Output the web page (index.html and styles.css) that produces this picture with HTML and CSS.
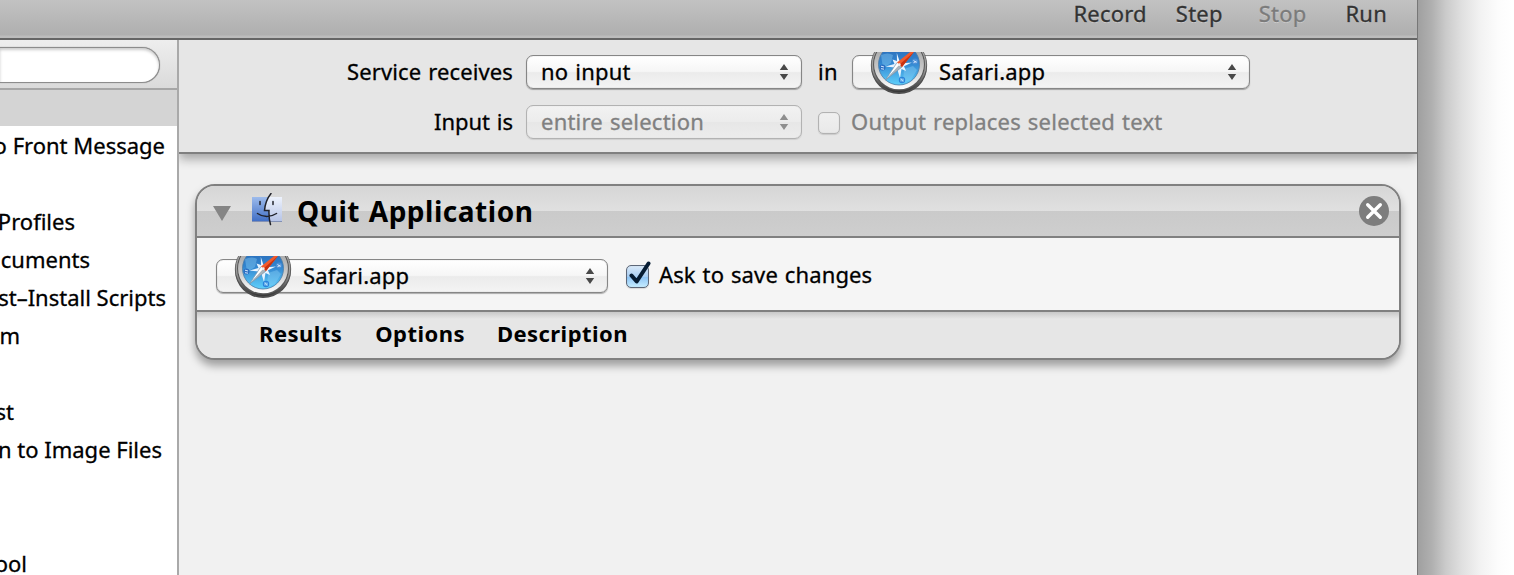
FILE: index.html
```html
<!DOCTYPE html>
<html lang="en">
<head>
<meta charset="utf-8">
<title>Automator</title>
<link rel="stylesheet" href="styles.css">
</head>
<body>
<svg class="defs" width="0" height="0" aria-hidden="true">
  <defs>
    <linearGradient id="rim" x1="0" y1="0" x2="0" y2="1"><stop offset="0" stop-color="#bbb"/><stop offset=".6" stop-color="#999"/><stop offset=".85" stop-color="#555"/><stop offset="1" stop-color="#333"/></linearGradient>
    <linearGradient id="ring" x1="0" y1="0" x2="0" y2="1"><stop offset="0" stop-color="#999"/><stop offset=".55" stop-color="#c6c6c6"/><stop offset="1" stop-color="#fff"/></linearGradient>
    <linearGradient id="sea" x1="0" y1="0" x2="0" y2="1"><stop offset="0" stop-color="#2a69b4"/><stop offset=".45" stop-color="#3184cf"/><stop offset="1" stop-color="#5fd0fb"/></linearGradient>
    <linearGradient id="faceL" x1="0" y1="0" x2="0" y2="1"><stop offset="0" stop-color="#9dbbec"/><stop offset="1" stop-color="#3d6cc4"/></linearGradient>
    <linearGradient id="faceR" x1="0" y1="0" x2="0" y2="1"><stop offset="0" stop-color="#eef3fd"/><stop offset="1" stop-color="#b4c2e6"/></linearGradient>
    <symbol id="compass" viewBox="0 0 60 44">
      <ellipse cx="30" cy="14.500" rx="28" ry="27.500" fill="#4a4a4a"/>
      <circle cx="30" cy="13" r="27.700" fill="url(#rim)" stroke="#555" stroke-width=".7"/>
      <circle cx="30" cy="12.500" r="25.400" fill="none" stroke="#5a5a5a" stroke-width="1.200"/>
      <circle cx="30" cy="12.500" r="24.800" fill="url(#ring)"/>
      <circle cx="30" cy="12.500" r="20.500" fill="url(#sea)" stroke="#4b7aa5" stroke-width=".8"/>
      <path d="M12 3q7-3 12 0l-2 8-8 5zM35 17l9-3 4 4-6 10-8 3z" fill="#8bd0f5" opacity=".4"/>
      <path d="M27.800 1l2.700 8 4.500-2-1 4.200 9-.7-8 3.700 2 4.800-4.500-2-1.500 9-2.500-8-4.500 2 1.500-4.500-9-1 9-2.500-2-4.500 4.500 1.500z" fill="#e8f4ff"/>
      <path d="M16.500 28L28 10.500l2.500 2.500z" fill="#fff"/><path d="M16.500 28L33 15l-2.500-2.500z" fill="#a9b3bb"/>
      <path d="M16.500 28L28 10.500M16.500 28L33 15" stroke="#7795ad" stroke-width=".7"/>
      <path d="M28 10.500L43-1.500 45 0 33 15z" fill="#f25a2c"/><path d="M30.500 12.500L45 0 33 15z" fill="#c9320f"/>
      <circle cx="30.300" cy="12.700" r="1.400" fill="#eee"/>
      <circle cx="13.500" cy="15.500" r="3" fill="#2b6ec2"/><path d="M12 14.200l3 .8M12 16.700l3 .5" stroke="#d6eaff"/>
      <circle cx="46" cy="9.500" r="3" fill="#4b8fd6"/><path d="M44.500 8.500l3 2M44.500 10.700l3-1.500" stroke="#d6eaff"/>
      <circle cx="33" cy="28" r="3.200" fill="#2a83da"/><path d="M32 29.500v-3l2 3v-3" fill="none" stroke="#c4ebff" stroke-width=".9"/>
    </symbol>
    <symbol id="updown" viewBox="0 0 10 16"><path d="M5 0l4.200 6H.8zM5 16l4.200-6H.8z" fill="currentColor"/></symbol>
  </defs>
</svg>
<div class="screen">
  <div class="window">
    <div class="toolbar"><span class="t record">Record</span><span class="t step">Step</span><span class="t stop">Stop</span><span class="t run">Run</span></div>
    <div class="main">
      <aside class="sidebar">
        <div class="search"><div class="field"></div></div>
        <div class="strip"></div>
        <ul class="list">
          <li class="r164"><span class="t">o Front Message</span></li><li></li>
          <li class="r74"><span class="t">Profiles</span></li>
          <li class="r90"><span class="t">cuments</span></li>
          <li class="r165"><span class="t">st–Install Scripts</span></li>
          <li class="r18"><span class="t">m</span></li><li></li>
          <li class="r13"><span class="t">st</span></li>
          <li class="r161"><span class="t">n to Image Files</span></li><li></li><li></li>
          <li class="r25"><span class="t">ool</span></li>
        </ul>
      </aside>
      <section class="workflow">
        <div class="settings">
          <div class="row">
            <div class="label"><span class="t service">Service receives</span></div>
            <div class="select w276"><span class="t noinput">no input</span><svg class="arrows"><use href="#updown"/></svg></div>
            <span class="t in">in</span>
            <div class="select w398 app"><svg class="compass"><use href="#compass"/></svg><span class="t safari">Safari.app</span><svg class="arrows"><use href="#updown"/></svg></div>
          </div>
          <div class="row">
            <div class="label"><span class="t inputis">Input is</span></div>
            <div class="select w276 off"><span class="t entire">entire selection</span><svg class="arrows"><use href="#updown"/></svg></div>
            <span class="check off"></span>
            <span class="t output">Output replaces selected text</span>
          </div>
        </div>
        <div class="canvas">
          <article class="action">
            <header class="head">
              <svg class="tri" viewBox="0 0 18 15"><path d="M0 0h18L9 15z" fill="#858585"/></svg>
              <svg class="finder" viewBox="0 0 30 34">
                <path d="M0 4h17c-3 5-4 9-5 14h5v11H0z" fill="url(#faceL)"/><path d="M17 4h13v25H17V18h-5c1-5 2-9 5-14z" fill="url(#faceR)"/>
                <path d="M0 28.500h30" stroke="#8391b4" stroke-width="1"/>
                <path d="M19 .5c-4 5-6 11-6.500 17h4.500c-.2 5 .3 10 1.500 14M5.500 20.500c5.500 4 13 4 19 0M8 8.500v3M21 8.500v3" fill="none" stroke="#20222a" stroke-width="1.500" stroke-linecap="round"/>
              </svg>
              <h1 class="t title">Quit Application</h1>
              <svg class="close" viewBox="0 0 30 30"><circle cx="15" cy="15" r="15" fill="#7d7d7d"/><path d="M8.700 8.700l12.600 12.600M21.300 8.700L8.700 21.300" stroke="#fff" stroke-width="3.400" stroke-linecap="round"/></svg>
            </header>
            <div class="body">
              <div class="select w392 app"><svg class="compass"><use href="#compass"/></svg><span class="t safari">Safari.app</span><svg class="arrows"><use href="#updown"/></svg></div>
              <span class="check on"><svg class="tick" viewBox="0 0 28 28"><path d="M5.500 14.500l5.200 6L22.500 2.500" fill="none" stroke="#061c33" stroke-width="4" stroke-linejoin="round" stroke-linecap="round"/></svg></span>
              <span class="t ask">Ask to save changes</span>
            </div>
            <footer class="foot"><b class="t results">Results</b><b class="t options">Options</b><b class="t desc">Description</b></footer>
          </article>
        </div>
      </section>
    </div>
  </div>
  <div class="shade"></div>
</div>
</body>
</html>
```
FILE: styles.css
```css
* { box-sizing: border-box; }
body { margin: 0; background: #fff; color: #000; font: 22px/30px "Noto Sans", "Open Sans", sans-serif; }
.defs { display: block; }
.t { white-space: pre; flex: none; padding-bottom: 2px; letter-spacing: .22px; word-spacing: 1px; -webkit-text-stroke: .3px currentColor; }
.screen { display: flex; width: 1514px; height: 575px; overflow: hidden; }
.window { width: 1418px; height: 575px; flex: none; border-right: 1px solid #777; display: flex; flex-direction: column; }
.shade { width: 96px; background: linear-gradient(90deg, #a0a0a0 0, #b0b0b0 14px, #cbcbcb 28px, #e0e0e0 44px, #f2f2f2 62px, #fcfcfc 80px, #fff 94px); }

.toolbar { height: 40px; flex: none; border-bottom: 2px solid #656565; background: linear-gradient(#c2c2c2, #afafaf 35px, #bcbcbc 36px, #bcbcbc); display: flex; justify-content: flex-end; color: #333; text-shadow: 0 1px 0 rgba(255,255,255,.35); line-height: 26px; }
.step { margin-left: 29px; }
.stop { margin-left: 36px; color: #7b7b7b; }
.run { margin-left: 39px; margin-right: 30px; }

.main { display: flex; flex: 1; min-height: 0; }
.sidebar { width: 179px; flex: none; border-right: 2px solid #a9a9a9; background: #fff; overflow: hidden; }
.search { height: 50px; padding-top: 7px; border-bottom: 2px solid #a6a6a6; background: linear-gradient(#eee, #dadada); }
.field { width: 160px; height: 36px; background: #fff; border: 1px solid #8c8c8c; border-left: 0; border-radius: 0 18px 18px 0; box-shadow: inset 0 2px 3px #ccc, 0 0 1px #888; }
.strip { height: 36px; background: #d4d4d4; }
.list { list-style: none; margin: 0; padding: 1px 0 0; }
.list li { height: 38px; line-height: 36px; display: flex; justify-content: flex-end; }
.list .t { letter-spacing: 0; word-spacing: 0; }
.r164 { width: 165px; } .r74 { width: 75px; } .r90 { width: 90px; } .r165 { width: 166px; }
.r18 { width: 20px; } .r13 { width: 14px; } .r161 { width: 162px; } .r25 { width: 27px; }

.workflow { flex: 1; background: #f1f1f1; display: flex; flex-direction: column; }
.settings { height: 114px; flex: none; padding-top: 15px; background: #e6e6e6; border-bottom: 2px solid #808080; box-shadow: 0 5px 10px rgba(0,0,0,.32); display: flex; flex-direction: column; gap: 16px; clip-path: inset(0 0 -20px 0); }
.row { display: flex; align-items: center; height: 34px; }
.label { width: 347px; padding-right: 13px; display: flex; justify-content: flex-end; }
.service { letter-spacing: .13px; }
.inputis { letter-spacing: 0; }
.select { height: 34px; flex: none; border: 1px solid #868686; border-radius: 7px; background: linear-gradient(#fff, #f6f6f6 48%, #ebebeb 52%, #f4f4f4); box-shadow: inset 0 0 1px rgba(0,0,0,.35), 0 1px 1px rgba(0,0,0,.3); display: flex; align-items: center; padding: 0 12px 0 14px; color: #000; }
.select.off { border-color: #b2b2b2; background: linear-gradient(#f2f2f2, #ececec 50%, #e7e7e7 51%, #ececec); color: #808080; box-shadow: inset 0 0 1px rgba(0,0,0,.15), 0 1px 1px rgba(0,0,0,.1); }
.w276 { width: 276px; } .w398 { width: 398px; } .w392 { width: 392px; }
.arrows { width: 10px; height: 16px; margin-left: auto; color: #484848; }
.off .arrows { color: #8e8e8e; }
.app { padding-left: 16px; }
.compass { width: 60px; height: 44px; flex: none; margin: -4px 10px 0 0; align-self: flex-start; }
.in { width: 50px; padding-left: 16px; }
.check { width: 22px; height: 22px; flex: none; border: 1px solid #b2b2b2; border-radius: 5px; background: linear-gradient(#f0f0f0, #e9e9e9); margin: 2px 11px 0 16px; box-shadow: inset 0 0 1px rgba(0,0,0,.2), 0 1px 1px rgba(0,0,0,.12); }
.check.on { border-color: #5d6778; background: linear-gradient(#d9e9f8, #a9cff4 50%, #8cc3f5 52%, #c5ecff); margin: 0 10px 0 18px; width: 23px; height: 23px; }
.tick { display: block; width: 28px; height: 28px; margin: -5px 0 0 -1px; }
.output { color: #808080; }
.safari { letter-spacing: .18px; }
.ask { padding-bottom: 4px; letter-spacing: .13px; }

.canvas { flex: 1; padding: 30px 16px 0; }
.action { width: 1206px; height: 176px; border: 2px solid #808080; border-radius: 20px; overflow: hidden; box-shadow: 0 6px 9px rgba(0,0,0,.34); background: #e6e6e6; }
.head { height: 52px; border-bottom: 2px solid #808080; background: linear-gradient(#d6d6d6, #e0e0e0 25px, #cacaca 25px, #cecece); display: flex; align-items: center; padding: 0 10px 0 16px; }
.tri { width: 18px; height: 15px; margin-top: 4px; }
.finder { width: 30px; height: 34px; margin-left: 21px; margin-top: -2px; }
.title { margin: 0 0 0 15px; padding: 0; font-size: 28px; line-height: 48px; font-weight: 700; letter-spacing: .52px; -webkit-text-stroke: 0; }
.close { width: 30px; height: 30px; margin-left: auto; }
.body { height: 74px; background: #f5f5f5; border-bottom: 2px solid #808080; display: flex; align-items: center; padding: 4px 0 0 19px; }
.foot { height: 46px; background: linear-gradient(#c8c8c8, #e6e6e6 7px); display: flex; align-items: center; padding: 0 0 2px 62px; }
.foot .t { letter-spacing: .45px; -webkit-text-stroke: 0; }
.options { margin-left: 33px; }
.desc { margin-left: 32px; }
```
